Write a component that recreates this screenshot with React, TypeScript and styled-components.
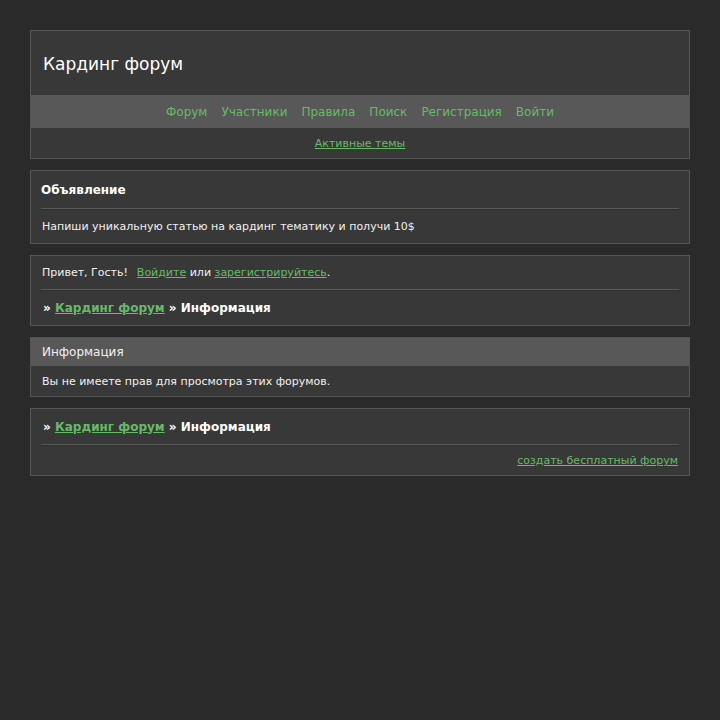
import styled, { createGlobalStyle } from 'styled-components';

const GlobalStyle = createGlobalStyle`
  html, body {
    margin: 0;
    padding: 0;
    background: #2a2a2a;
    font-family: "DejaVu Sans", Verdana, sans-serif;
    color: #f0f0f0;
  }
`;

const Page = styled.div`
  padding: 30px 30px;
  display: flex;
  flex-direction: column;
  gap: 11px;
`;

const Box = styled.section`
  background: #383838;
  border: 1px solid #555;
`;

const Title = styled.h1`
  margin: 0;
  height: 64px;
  padding: 1px 12px 0;
  box-sizing: border-box;
  display: flex;
  align-items: center;
  font-size: 17px;
  font-weight: normal;
  color: #fff;
`;

const NavBar = styled.nav`
  background: #585858;
  height: 33px;
  display: flex;
  align-items: center;
  justify-content: center;
  gap: 14px;
  font-size: 12px;
`;

const NavLink = styled.a`
  color: #66bb66;
  text-decoration: none;
`;

const SubNav = styled.div`
  height: 30px;
  display: flex;
  align-items: center;
  justify-content: center;
  font-size: 11px;
`;

const Link = styled.a`
  color: #66bb66;
  text-decoration: underline;
`;

const Greeting = styled.span`
  margin-right: 9px;
`;

const Inner = styled.div`
  padding: 0 10px;
`;

const Heading = styled.div`
  height: 37px;
  display: flex;
  align-items: center;
  font-size: 12px;
  font-weight: bold;
  color: #fff;
`;

const Rule = styled.hr`
  margin: 0;
  border: 0;
  border-top: 1px solid #595959;
  border-bottom: 1px solid #2f2f2f;
`;

const Line = styled.div<{ $h: number; $right?: boolean }>`
  height: ${(p) => p.$h}px;
  display: flex;
  align-items: center;
  justify-content: ${(p) => (p.$right ? 'flex-end' : 'flex-start')};
  padding: 0 1px;
  font-size: 11px;
  white-space: pre;
`;

const Crumbs = styled.div<{ $h: number }>`
  height: ${(p) => p.$h}px;
  display: flex;
  align-items: center;
  padding: 0 2px;
  font-size: 12px;
  font-weight: bold;
  color: #fff;
  white-space: pre;
`;

const BarHead = styled.div`
  background: #585858;
  height: 28px;
  display: flex;
  align-items: center;
  padding: 0 11px;
  font-size: 12px;
`;

const Breadcrumb = ({ h }: { h: number }) => (
  <Crumbs $h={h}>
    {'» '}
    <Link href="#">Кардинг форум</Link>
    {' » Информация'}
  </Crumbs>
);

export default function App() {
  return (
    <>
      <GlobalStyle />
      <Page>
        <Box>
          <Title>Кардинг форум</Title>
          <NavBar>
            <NavLink href="#">Форум</NavLink>
            <NavLink href="#">Участники</NavLink>
            <NavLink href="#">Правила</NavLink>
            <NavLink href="#">Поиск</NavLink>
            <NavLink href="#">Регистрация</NavLink>
            <NavLink href="#">Войти</NavLink>
          </NavBar>
          <SubNav>
            <Link href="#">Активные темы</Link>
          </SubNav>
        </Box>

        <Box>
          <Inner>
            <Heading>Объявление</Heading>
            <Rule />
            <Line $h={33}>Напиши уникальную статью на кардинг тематику и получи 10$</Line>
          </Inner>
        </Box>

        <Box>
          <Inner>
            <Line $h={33}>
              <Greeting>Привет, Гость!</Greeting>
              <Link href="#">Войдите</Link>
              {' или '}
              <Link href="#">зарегистрируйтесь</Link>
              {'.'}
            </Line>
            <Rule />
            <Breadcrumb h={34} />
          </Inner>
        </Box>

        <Box>
          <BarHead>Информация</BarHead>
          <Inner>
            <Line $h={30}>Вы не имеете прав для просмотра этих форумов.</Line>
          </Inner>
        </Box>

        <Box>
          <Inner>
            <Breadcrumb h={35} />
            <Rule />
            <Line $h={29} $right>
              <Link href="#">создать бесплатный форум</Link>
            </Line>
          </Inner>
        </Box>
      </Page>
    </>
  );
}
